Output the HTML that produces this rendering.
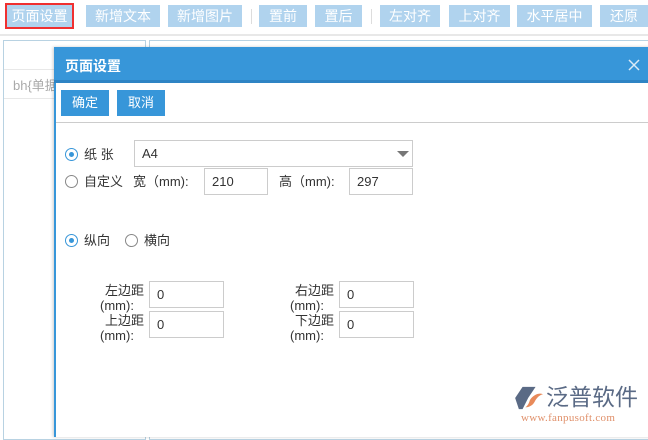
<!DOCTYPE html><html><head><meta charset="utf-8"><style>
*{margin:0;padding:0;box-sizing:border-box}
body{width:648px;height:431px;overflow:hidden;background:#fff;font-family:"Liberation Sans","Noto Sans CJK SC",sans-serif;position:relative;font-size:13px;color:#333}
.a{position:absolute;white-space:nowrap}
.tb{background:#b0d3ee;color:#fff;font-size:14px;text-align:center;line-height:22px;height:22px;top:5px}
.inp{position:absolute;border:1px solid #ccc;background:#fff;height:27px;line-height:25px;padding-left:7px;font-size:13px;color:#333}
.r{position:absolute;width:13px;height:13px;border:1px solid #888;border-radius:50%;background:#fff}
.r.on{border-color:#3796d9}
.r.on:after{content:"";position:absolute;left:3px;top:3px;width:5px;height:5px;border-radius:50%;background:#3796d9}
.lb{position:absolute;font-size:13px;color:#333;line-height:15px;white-space:nowrap}
</style></head><body>
<div class="a" style="left:5px;top:3px;width:69px;height:26px;border:2px solid #f03030"></div>
<div class="a tb" style="left:7px;width:65px">页面设置</div>
<div class="a tb" style="left:86px;width:74px">新增文本</div>
<div class="a tb" style="left:168px;width:74px">新增图片</div>
<div class="a" style="left:251px;top:9px;width:1px;height:15px;background:#ddd"></div>
<div class="a tb" style="left:259px;width:48px">置前</div>
<div class="a tb" style="left:315px;width:47px">置后</div>
<div class="a" style="left:371px;top:9px;width:1px;height:15px;background:#ddd"></div>
<div class="a tb" style="left:380px;width:60px">左对齐</div>
<div class="a tb" style="left:449px;width:61px">上对齐</div>
<div class="a tb" style="left:517px;width:75px">水平居中</div>
<div class="a tb" style="left:600px;width:48px">还原</div>
<div class="a" style="left:0;top:34px;width:648px;height:2px;background:#e8e8e8"></div>
<div class="a" style="left:3px;top:40px;width:143px;height:400px;border:1px solid #b8d2e2"></div>
<div class="a" style="left:4px;top:69px;width:140px;height:1px;background:#e8e8e8"></div>
<div class="a" style="left:4px;top:98px;width:140px;height:1px;background:#e8e8e8"></div>
<div class="a" style="left:13px;top:75px;color:#aaa;font-size:13px">bh{单据</div>
<div class="a" style="left:149px;top:40px;width:500px;height:400px;border:1px solid #b8d2e2"></div>
<div class="a" style="left:54px;top:47px;width:600px;height:390px;background:#fff;box-shadow:-1px 0 3px rgba(0,0,0,.2);border-left:2px solid #3796d9"></div>
<div class="a" style="left:54px;top:47px;width:600px;height:36px;background:#3796d9;border-bottom:3px solid #2e84c4"></div>
<div class="a" style="left:65px;top:56px;color:#fff;font-size:14px;font-weight:bold">页面设置</div>
<svg class="a" style="left:628px;top:59px" width="12" height="12" viewBox="0 0 12 12"><path d="M1 1L11 11M11 1L1 11" stroke="#dbeaf6" stroke-width="1.5"/></svg>
<div class="a" style="left:61px;top:90px;width:48px;height:26px;background:#3796d9;color:#fff;text-align:center;line-height:26px;font-size:13px">确定</div>
<div class="a" style="left:117px;top:90px;width:48px;height:26px;background:#3796d9;color:#fff;text-align:center;line-height:26px;font-size:13px">取消</div>
<div class="a" style="left:56px;top:122px;width:592px;height:1px;background:#ccc"></div>
<div class="r on" style="left:65px;top:148px"></div><div class="lb" style="left:84px;top:147px">纸 张</div>
<div class="inp" style="left:134px;top:140px;width:279px">A4</div>
<div class="a" style="left:397px;top:151px;width:0;height:0;border-left:6px solid transparent;border-right:6px solid transparent;border-top:6px solid #777"></div>
<div class="r" style="left:65px;top:175px"></div><div class="lb" style="left:84px;top:174px">自定义</div>
<div class="lb" style="left:133px;top:174px">宽（mm):</div>
<div class="inp" style="left:204px;top:168px;width:64px">210</div>
<div class="lb" style="left:279px;top:174px">高（mm):</div>
<div class="inp" style="left:349px;top:168px;width:64px">297</div>
<div class="r on" style="left:65px;top:234px"></div><div class="lb" style="left:84px;top:233px">纵向</div>
<div class="r" style="left:125px;top:234px"></div><div class="lb" style="left:144px;top:233px">横向</div>
<div class="lb" style="left:100px;top:283px;width:44px;text-align:right">左边距</div><div class="lb" style="left:100px;top:298px">(mm):</div>
<div class="inp" style="left:149px;top:281px;width:75px">0</div>
<div class="lb" style="left:100px;top:313px;width:44px;text-align:right">上边距</div><div class="lb" style="left:100px;top:328px">(mm):</div>
<div class="inp" style="left:149px;top:311px;width:75px">0</div>
<div class="lb" style="left:290px;top:283px;width:44px;text-align:right">右边距</div><div class="lb" style="left:290px;top:298px">(mm):</div>
<div class="inp" style="left:339px;top:281px;width:75px">0</div>
<div class="lb" style="left:290px;top:313px;width:44px;text-align:right">下边距</div><div class="lb" style="left:290px;top:328px">(mm):</div>
<div class="inp" style="left:339px;top:311px;width:75px">0</div>
<svg class="a" style="left:515px;top:385px" width="30" height="26" viewBox="0 0 32 28"><path d="M8 2h14l-8 12-6 12H4L0 14z" fill="#5a6a85"/><path d="M16 16c4-6 10-8 14-6-4 1-7 4-9 8s-6 6-10 6c3-2 4-5 5-8z" fill="#e88a5a"/></svg>
<div class="a" style="left:546px;top:383px;font-size:23px;line-height:28px;color:#5a6a85">泛普软件</div>
<div class="a" style="left:521px;top:412px;font-size:11px;line-height:12px;color:#e0906a;font-family:'Liberation Serif',serif;letter-spacing:0.3px">www.fanpusoft.com</div>
</body></html>
